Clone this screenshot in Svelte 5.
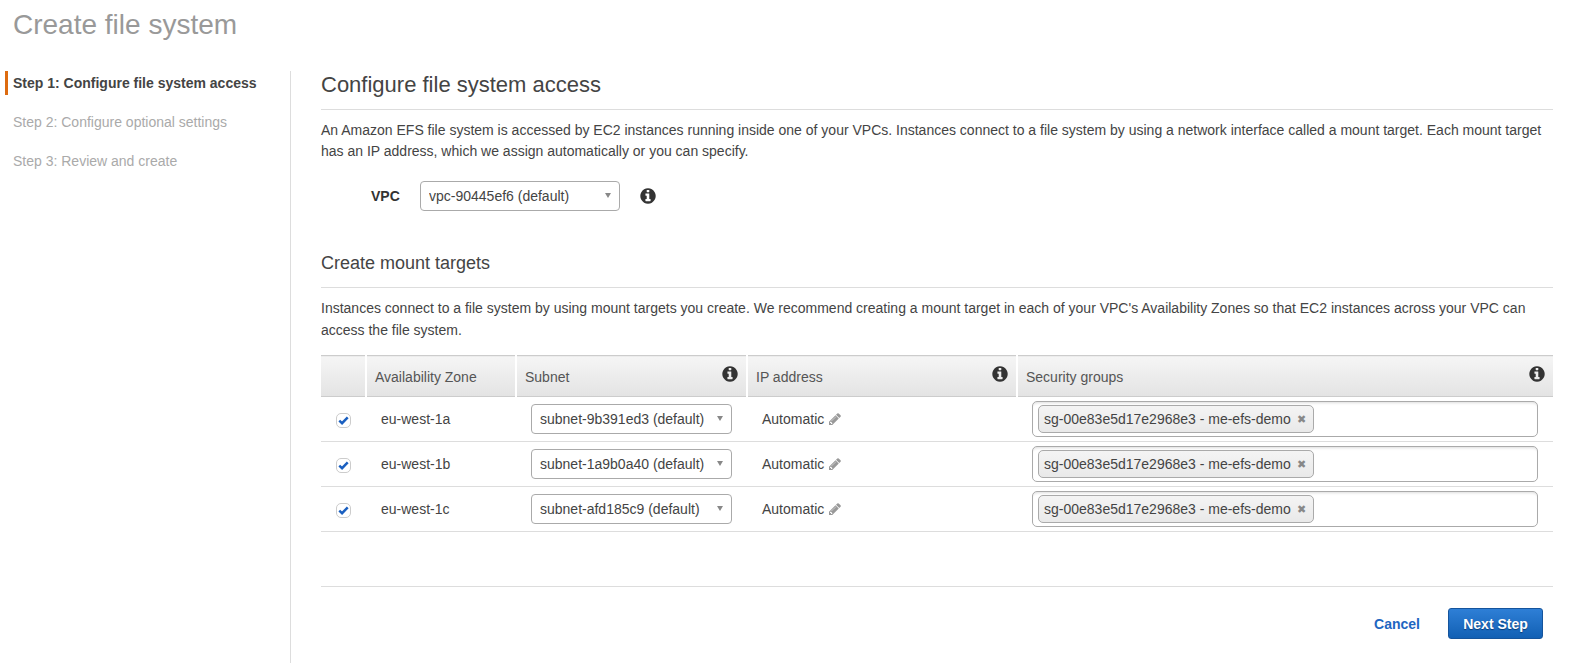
<script>
	const steps = [
		{ label: "Step 1: Configure file system access", active: true },
		{ label: "Step 2: Configure optional settings" },
		{ label: "Step 3: Review and create" },
	];

	const targets = [
		{ zone: "eu-west-1a", subnet: "subnet-9b391ed3 (default)" },
		{ zone: "eu-west-1b", subnet: "subnet-1a9b0a40 (default)" },
		{ zone: "eu-west-1c", subnet: "subnet-afd185c9 (default)" },
	];
</script>

{#snippet info()}
	<svg class="info" viewBox="0 0 1792 1792" aria-hidden="true">
		<path
			d="M1152 1376v-160q0-14-9-23t-23-9h-96v-512q0-14-9-23t-23-9h-320q-14 0-23 9t-9 23v160q0 14 9 23t23 9h96v320h-96q-14 0-23 9t-9 23v160q0 14 9 23t23 9h448q14 0 23-9t9-23zm-128-896v-160q0-14-9-23t-23-9h-192q-14 0-23 9t-9 23v160q0 14 9 23t23 9h192q14 0 23-9t9-23zm640 416q0 209-103 385.5t-279.5 279.5-385.5 103-385.5-103-279.5-279.5-103-385.5 103-385.5 279.5-279.5 385.5-103 385.5 103 279.5 279.5 103 385.5z"
		/>
	</svg>
{/snippet}

<div class="page">
	<h1>Create file system</h1>
	<div class="layout">
		<nav>
			{#each steps as step}
				<div class="step" class:active={step.active}>{step.label}</div>
			{/each}
		</nav>
		<main>
			<h2>Configure file system access</h2>
			<p class="intro">
				An Amazon EFS file system is accessed by EC2 instances running inside one of your VPCs. Instances connect to a file system by using a network interface called a mount target. Each mount target has an IP address, which we assign automatically or you can specify.
			</p>
			<div class="vpc">
				<label for="vpc">VPC</label>
				<div class="select vpc-select">
					<select id="vpc"><option>vpc-90445ef6 (default)</option></select>
				</div>
				{@render info()}
			</div>

			<h3>Create mount targets</h3>
			<p class="intro second">
				Instances connect to a file system by using mount targets you create. We recommend creating a mount target in each of your VPC's Availability Zones so that EC2 instances across your VPC can access the file system.
			</p>

			<table>
				<colgroup>
					<col style="width: 45px" />
					<col style="width: 150px" />
					<col style="width: 231px" />
					<col style="width: 270px" />
					<col />
				</colgroup>
				<thead>
					<tr>
						<th></th>
						<th>Availability Zone</th>
						<th>Subnet {@render info()}</th>
						<th>IP address {@render info()}</th>
						<th>Security groups {@render info()}</th>
					</tr>
				</thead>
				<tbody>
					{#each targets as target}
						<tr>
							<td class="check-cell">
								<span class="check">
									<svg viewBox="0 0 12 10" aria-hidden="true">
										<path d="M1.3 5.2 4.4 8 10.7 1.6" />
									</svg>
								</span>
							</td>
							<td class="zone">{target.zone}</td>
							<td class="subnet-cell">
								<div class="select subnet-select">
									<select><option>{target.subnet}</option></select>
								</div>
							</td>
							<td class="ip">
								Automatic
								<svg class="pencil" viewBox="0 0 1792 1792" aria-hidden="true">
									<path
										d="M491 1536l91-91-235-235-91 91v107h128v128h107zm523-928q0-22-22-22-10 0-17 7l-542 542q-7 7-7 17 0 22 22 22 10 0 17-7l542-542q7-7 7-17zm-54-192l416 416-832 832h-416v-416zm683 96q0 53-37 90l-166 166-416-416 166-165q36-38 90-38 53 0 91 38l235 234q37 39 37 91z"
									/>
								</svg>
							</td>
							<td class="sg-cell">
								<div class="tokens">
									<span class="token">sg-00e83e5d17e2968e3 - me-efs-demo <b>✖</b></span>
								</div>
							</td>
						</tr>
					{/each}
				</tbody>
			</table>

			<footer>
				<a href="#cancel">Cancel</a>
				<button>Next Step</button>
			</footer>
		</main>
	</div>
</div>

<style>
	:global(body) {
		margin: 0;
		background: #fff;
	}

	.page {
		height: 663px;
		overflow: hidden;
		font-family: "Liberation Sans", Arial, sans-serif;
		font-size: 14px;
		color: #444;
	}

	h1 {
		height: 71px;
		margin: 0;
		padding: 9px 0 0 13px;
		box-sizing: border-box;
		font-size: 28px;
		line-height: 32px;
		font-weight: 400;
		color: #999;
	}

	.layout {
		display: flex;
		height: 592px;
	}

	nav {
		flex: none;
		width: 291px;
		border-right: 1px solid #ddd;
		padding-left: 5px;
		box-sizing: border-box;
	}

	.step {
		height: 24px;
		margin-bottom: 15px;
		line-height: 24px;
		color: #aaa;
		border-left: 3px solid transparent;
		padding-left: 5px;
	}

	.step.active {
		font-weight: 700;
		color: #444;
		border-left-color: #dd6b10;
	}

	main {
		flex: 1;
		min-width: 0;
		padding: 0 39px 0 30px;
	}

	h2 {
		margin: 0;
		height: 38px;
		border-bottom: 1px solid #ddd;
		font-size: 22px;
		line-height: 28px;
		font-weight: 400;
	}

	h3 {
		margin: 40px 0 0;
		height: 36px;
		border-bottom: 1px solid #ddd;
		font-size: 18px;
		line-height: 24px;
		font-weight: 400;
	}

	.intro {
		margin: 10px 0 0;
		line-height: 21px;
	}

	.intro.second {
		margin-top: 9px;
		line-height: 22px;
	}

	.vpc {
		display: flex;
		align-items: center;
		margin-top: 19px;
		padding-left: 50px;
	}

	.vpc label {
		width: 49px;
		font-weight: 700;
		color: #333;
	}

	.vpc .info {
		margin-left: 19px;
	}

	.select {
		position: relative;
		box-sizing: border-box;
	}

	.select select {
		display: block;
		width: 100%;
		height: 30px;
		padding: 0 20px 0 8px;
		border: 1px solid #aaa;
		border-radius: 4px;
		background: #fff;
		font: inherit;
		color: #444;
		appearance: none;
	}

	.select::after {
		content: "";
		position: absolute;
		top: 12px;
		right: 9px;
		border-left: 3px solid transparent;
		border-right: 3px solid transparent;
		border-top: 5px solid #888;
		pointer-events: none;
	}

	.vpc-select {
		width: 200px;
	}

	.subnet-select {
		width: 201px;
	}

	.info {
		width: 18px;
		height: 18px;
		fill: #333;
	}

	table {
		width: 100%;
		margin-top: 14px;
		border-collapse: collapse;
		table-layout: fixed;
	}

	th {
		position: relative;
		height: 41px;
		padding: 2px 0 0 8px;
		box-sizing: border-box;
		border-top: 1px solid #ccc;
		border-bottom: 1px solid #ccc;
		border-left: 2px solid #fff;
		background: linear-gradient(#f5f5f5, #e3e3e3);
		font-weight: 400;
		text-align: left;
		color: #555;
	}

	th:first-child {
		border-left: 0;
	}

	th .info {
		position: absolute;
		top: 9px;
		right: 7px;
	}

	td {
		height: 45px;
		padding: 0;
		box-sizing: border-box;
		border-bottom: 1px solid #ddd;
	}

	.check-cell {
		padding-left: 15px;
	}

	.check {
		display: flex;
		align-items: center;
		justify-content: center;
		width: 15px;
		height: 15px;
		margin-top: 2px;
		box-sizing: border-box;
		border: 1px solid #ccc;
		border-radius: 5px;
		background: #fff;
	}

	.check svg {
		width: 11px;
		height: 9px;
		fill: none;
		stroke: #1a5fc0;
		stroke-width: 2.8;
	}

	.zone {
		padding-left: 15px;
	}

	.subnet-cell {
		padding-left: 15px;
	}

	.ip {
		padding-left: 15px;
	}

	.pencil {
		width: 14px;
		height: 14px;
		fill: #999;
		vertical-align: -2px;
	}

	.sg-cell {
		padding-left: 15px;
	}

	.tokens {
		display: flex;
		align-items: center;
		box-sizing: border-box;
		width: 506px;
		height: 36px;
		padding-left: 5px;
		border: 1px solid #aaa;
		border-radius: 5px;
		box-shadow: inset 0 3px 3px -2px #ddd;
	}

	.token {
		display: inline-flex;
		align-items: center;
		gap: 6px;
		box-sizing: border-box;
		height: 28px;
		padding: 0 7px 0 5px;
		border: 1px solid #aaa;
		border-radius: 5px;
		background: linear-gradient(#f4f4f4, #e9e9e9);
		color: #444;
	}

	.token b {
		font-size: 11px;
		font-weight: 400;
		color: #888;
	}

	footer {
		display: flex;
		align-items: center;
		justify-content: flex-end;
		margin-top: 54px;
		padding: 21px 10px 0 0;
		border-top: 1px solid #ddd;
	}

	footer a {
		margin-right: 28px;
		font-weight: 700;
		color: #1e66c1;
		text-decoration: none;
	}

	footer button {
		width: 95px;
		height: 31px;
		border: 1px solid #15549c;
		border-radius: 3px;
		background: linear-gradient(#2e7fd6, #1260b4);
		font: inherit;
		font-weight: 700;
		color: #fff;
		text-shadow: 0 1px 1px #0b3c75;
	}
</style>
